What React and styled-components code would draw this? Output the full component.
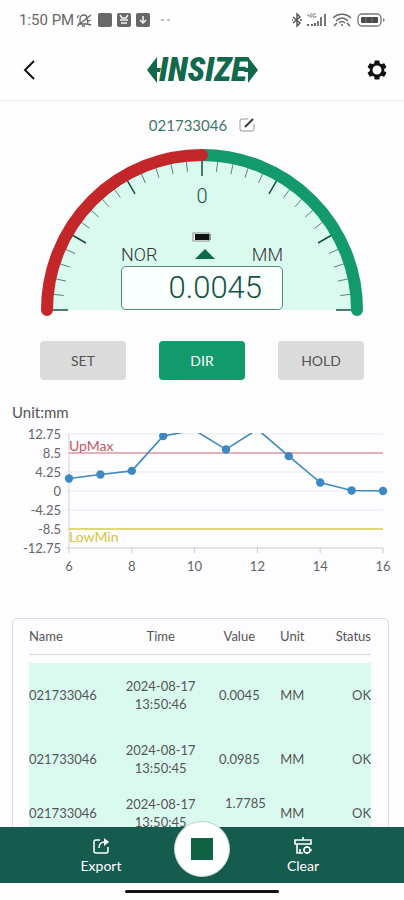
import React from "react";
import styled, { createGlobalStyle, css } from "styled-components";

const series = [
  [6, 2.8],
  [7, 3.7],
  [8, 4.5],
  [9, 12.3],
  [10, 13.6],
  [11, 9.3],
  [12, 13.8],
  [13, 7.8],
  [14, 1.9],
  [15, 0.0985],
  [16, 0.0045],
];

const rows = [
  { name: "021733046", date: "2024-08-17", time: "13:50:46", value: "0.0045" },
  { name: "021733046", date: "2024-08-17", time: "13:50:45", value: "0.0985" },
  {
    name: "021733046",
    date: "2024-08-17",
    time: "13:50:45",
    value: "1.7785",
    compact: true,
  },
];

function StatusIcons() {
  return (
    <StatusGroup>
      <svg width="18" height="16" viewBox="0 0 18 16" fill="none" stroke="#666" strokeWidth="1.3">
        <path d="M3 12h10M5 11V7c0-3 2-4 4-4s3 2 3 4l1 4M7 14h3M2 14 16 3M2 6l2-3M13 9l3-1M12 12l4 1" />
      </svg>
      <svg width="14" height="16" viewBox="0 0 14 16">
        <rect y="1" width="14" height="14" rx="2" fill="#686868" />
      </svg>
      <svg width="14" height="16" viewBox="0 0 14 16">
        <rect y="1" width="14" height="14" rx="2" fill="#686868" />
        <path d="M3 3l2 3h4l2-3M3 8h8M4 11h6" fill="none" stroke="#f4f4f4" strokeWidth="1.4" />
      </svg>
      <svg width="14" height="16" viewBox="0 0 14 16">
        <rect y="1" width="14" height="14" rx="2" fill="#686868" />
        <path d="M7 4v7M4 8l3 3 3-3" fill="none" stroke="#f4f4f4" strokeWidth="1.5" />
      </svg>
      <svg width="16" height="16" viewBox="0 0 16 16" fill="#b5b5b5">
        <rect x="6" y="7" width="3" height="2" rx="1" />
        <rect x="12" y="7" width="3" height="2" rx="1" />
      </svg>
    </StatusGroup>
  );
}

function SystemIcons() {
  return (
    <StatusGroup>
      <svg width="10" height="16" viewBox="0 0 10 16" fill="none" stroke="#555" strokeWidth="1.4">
        <path d="M1 5l7 6-3 3V2l3 3-7 6" />
        <path d="M0 8h1M8 8h2" />
      </svg>
      <svg width="20" height="16" viewBox="0 0 20 16">
        <path d="M1 2v2h3M4 1v5M9 2H6v3h3V4" fill="none" stroke="#888" />
        <path d="M0 12h2v2H0zM4 12h2v2H4zM7 11h2v3H7z" fill="#666" />
        <path d="M10 9h2v5h-2zM13 5h2v9h-2zM17 2h2v12h-2z" fill="#777" />
      </svg>
      <svg width="20" height="16" viewBox="0 0 20 16" fill="none" stroke="#666" strokeWidth="1.5">
        <path d="M1 6c5-5 13-5 18 0M4 9c4-4 8-4 12 0M7 11c2-2 4-2 6 0" />
        <path d="M9 13h2M2 14l3-3M18 14l-3-3" />
      </svg>
      <svg width="28" height="16" viewBox="0 0 28 16">
        <rect x="1" y="2" width="23" height="12" rx="4" fill="none" stroke="#777" strokeWidth="1.3" />
        <rect x="4" y="5" width="17" height="6" rx="1" fill="#4a4a4a" />
        <path d="M9 5v6M15 5v6" stroke="#777" />
        <path d="M26 6v4l2-2z" fill="#777" />
      </svg>
    </StatusGroup>
  );
}

function Logo() {
  return (
    <Brand>
      <svg width="14" height="28" viewBox="0 0 14 28" fill="#11694b">
        <path d="M0 14 10 1v11h4l-1 4h-3v11z" />
      </svg>
      <span>INSIZE</span>
      <svg width="14" height="28" viewBox="0 0 14 28" fill="#11694b">
        <path d="M14 14 4 1v11H1l-1 4h4v11z" />
      </svg>
    </Brand>
  );
}

function Dial() {
  const ticks = [];
  for (let deg = 0; deg <= 180; deg += 6) {
    const major = deg % 30 === 0;
    const a = (deg * Math.PI) / 180;
    const inner = major ? 134 : 139;
    ticks.push(
      <line
        key={deg}
        x1={162 - Math.cos(a) * 149}
        y1={161 - Math.sin(a) * 149}
        x2={162 - Math.cos(a) * inner}
        y2={161 - Math.sin(a) * inner}
        stroke={major ? "#174f3d" : "#5c8376"}
        strokeWidth={major ? 1.5 : 1}
      />
    );
  }
  return (
    <DialSvg viewBox="0 0 324 168" aria-hidden="true">
      <path d="M7 161a155 155 0 0 1 310 0z" fill="#dafaf0" />
      {ticks}
      <path d="M162 6a155 155 0 0 1 155 155" fill="none" stroke="#129a6c" strokeWidth="12" strokeLinecap="round" />
      <path d="M7 161A155 155 0 0 1 162 6" fill="none" stroke="#c4272a" strokeWidth="12" strokeLinecap="round" />
    </DialSvg>
  );
}

function Chart() {
  const x = (n) => 57 + (n - 6) * 31.4;
  const y = (v) => 67 - v * 4.47;
  const levels = [12.75, 8.5, 4.25, 0, -4.25, -8.5, -12.75];
  return (
    <ChartSvg viewBox="0 0 380 156" role="img" aria-label="Measured values">
      <clipPath id="plot">
        <rect x="50" y="9" width="328" height="120" />
      </clipPath>
      {levels.map((v) => (
        <g key={v}>
          <line x1="54" x2={x(16)} y1={y(v)} y2={y(v)} stroke={v === -12.75 ? "#ccc8ce" : "#ece9ee"} />
          <text x="49" y={y(v) + 5} textAnchor="end">
            {v}
          </text>
        </g>
      ))}
      <line x1="57" x2="57" y1={y(12.75)} y2={y(-12.75)} stroke="#d5d1d8" />
      {[6, 8, 10, 12, 14, 16].map((n) => (
        <g key={n}>
          <line x1={x(n)} x2={x(n)} y1={y(-12.75)} y2={y(-12.75) + 5} stroke="#ccc8ce" />
          <text x={x(n)} y="147" textAnchor="middle">
            {n}
          </text>
        </g>
      ))}
      <line x1="57" x2={x(16)} y1={y(8.5)} y2={y(8.5)} stroke="#cf7379" />
      <line x1="57" x2={x(16)} y1={y(-8.5)} y2={y(-8.5)} stroke="#d9cf4a" strokeWidth="1.5" />
      <text x="57" y="27" className="upper">
        UpMax
      </text>
      <text x="57" y="118" className="lower">
        LowMin
      </text>
      <g clipPath="url(#plot)">
        <polyline
          points={series.map(([n, v]) => `${x(n)},${y(v)}`).join(" ")}
          fill="none"
          stroke="#3d8abf"
          strokeWidth="1.6"
        />
        {series
          .filter(([, v]) => v <= 12.75)
          .map(([n, v]) => (
            <circle key={n} cx={x(n)} cy={y(v)} r="4.2" fill="#3d88c0" />
          ))}
      </g>
    </ChartSvg>
  );
}

export default function App() {
  return (
    <Screen>
      <GlobalStyle />
      <StatusBar>
        <StatusGroup>
          <span>1:50 PM</span>
          <StatusIcons />
        </StatusGroup>
        <SystemIcons />
      </StatusBar>
      <Header>
        <IconButton aria-label="Back">
          <svg width="20" height="22" viewBox="0 0 20 22" fill="none" stroke="#111" strokeWidth="2">
            <path d="M14 2 5 11l9 9" />
          </svg>
        </IconButton>
        <Logo />
        <IconButton aria-label="Settings">
          <svg width="24" height="24" viewBox="0 0 24 24" fill="#111">
            <path d="M19.14 12.94c.04-.3.06-.61.06-.94 0-.32-.02-.64-.07-.94l2.03-1.58a.49.49 0 0 0 .12-.61l-1.92-3.32a.49.49 0 0 0-.59-.22l-2.39.96c-.5-.38-1.03-.7-1.62-.94l-.36-2.54a.48.48 0 0 0-.48-.41h-3.84c-.24 0-.43.17-.47.41l-.36 2.54c-.59.24-1.13.57-1.62.94l-2.39-.96a.48.48 0 0 0-.59.22L2.74 8.87c-.12.21-.08.47.12.61l2.03 1.58c-.05.3-.09.63-.09.94s.02.64.07.94l-2.03 1.58a.49.49 0 0 0-.12.61l1.92 3.32c.12.22.37.29.59.22l2.39-.96c.5.38 1.03.7 1.62.94l.36 2.54c.05.24.24.41.48.41h3.84c.24 0 .44-.17.47-.41l.36-2.54c.59-.24 1.13-.56 1.62-.94l2.39.96c.22.08.47 0 .59-.22l1.92-3.32c.12-.22.07-.47-.12-.61zM12 16.5a4.5 4.5 0 1 1 0-9 4.5 4.5 0 0 1 0 9z" />
          </svg>
        </IconButton>
      </Header>
      <Main>
        <Device>
          <span>021733046</span>
          <IconButton aria-label="Rename device">
            <svg width="16" height="16" viewBox="0 0 16 16" fill="none" stroke="#999">
              <path d="M9 2H3a2 2 0 0 0-2 2v8a2 2 0 0 0 2 2h10a2 2 0 0 0 2-2V7" />
              <path d="M6 10 14 2" stroke="#333" strokeWidth="1.8" />
            </svg>
          </IconButton>
        </Device>
        <Gauge>
          <Dial />
          <Readout>
            <Zero>0</Zero>
            <svg width="20" height="10" viewBox="0 0 20 10">
              <rect x="1" y="1" width="16" height="8" fill="#fff" stroke="#888" />
              <rect x="3" y="2" width="14" height="6" fill="#111" />
              <path d="M18 2v6" stroke="#777" strokeWidth="1.5" />
            </svg>
            <Modes>
              <span>NOR</span>
              <svg width="20" height="10" viewBox="0 0 20 10" fill="#11694b">
                <path d="M10 0l10 10H0z" />
              </svg>
              <span>MM</span>
            </Modes>
            <Lcd>0.0045</Lcd>
          </Readout>
        </Gauge>
        <Actions>
          <ModeButton>SET</ModeButton>
          <ModeButton $active>DIR</ModeButton>
          <ModeButton>HOLD</ModeButton>
        </Actions>
        <ChartBox>
          <ChartTitle>Unit:mm</ChartTitle>
          <Chart />
        </ChartBox>
        <Card>
          <Table>
            <thead>
              <tr>
                <Th $align="left" $width="25%">Name</Th>
                <Th $width="27%">Time</Th>
                <Th $width="19%">Value</Th>
                <Th $width="12%">Unit</Th>
                <Th $align="right">Status</Th>
              </tr>
            </thead>
            <tbody>
              <Spacer aria-hidden="true">
                <td colSpan="5" />
              </Spacer>
              {rows.map((r, i) => (
                <Row key={i} $compact={r.compact}>
                  <Td $align="left">{r.name}</Td>
                  <Td>
                    {r.date}
                    <br />
                    {r.time}
                  </Td>
                  <Td $top={r.compact}>{r.value}</Td>
                  <Td>MM</Td>
                  <Td $align="right">OK</Td>
                </Row>
              ))}
            </tbody>
          </Table>
        </Card>
      </Main>
      <Footer>
        <FooterButton>
          <svg width="18" height="18" viewBox="0 0 18 18" fill="none" stroke="#fff" strokeWidth="1.5">
            <path d="M8 3H4a2 2 0 0 0-2 2v9a2 2 0 0 0 2 2h10a2 2 0 0 0 2-2v-4" />
            <path d="M7 11c0-4 2-6 6-6" />
            <path d="M12 1v8l5-4z" fill="#fff" stroke="none" />
          </svg>
          Export
        </FooterButton>
        <StopButton aria-label="Stop">
          <svg width="22" height="22" viewBox="0 0 22 22">
            <rect width="22" height="22" fill="#0f6244" />
          </svg>
        </StopButton>
        <FooterButton>
          <svg width="20" height="18" viewBox="0 0 20 18" fill="none" stroke="#fff" strokeWidth="1.6">
            <path d="M10 0v3M2 7V3h16v4zM4 7v9h6M7 12v4" />
            <circle cx="14" cy="13" r="3" />
            <path d="M10 13h1M17 13h2M14 9v1M14 16v1" />
          </svg>
          Clear
        </FooterButton>
      </Footer>
      <HomeArea>
        <HomeBar />
      </HomeArea>
    </Screen>
  );
}

const GlobalStyle = createGlobalStyle`
  * {
    box-sizing: border-box;
  }
  body {
    margin: 0;
    background: #fdfcfe;
    font-family: Lato, "Open Sans", sans-serif;
    color: #555;
  }
  button {
    font-family: inherit;
    border: none;
    cursor: pointer;
  }
  svg {
    display: block;
    flex-shrink: 0;
  }
`;

const Screen = styled.div`
  display: flex;
  flex-direction: column;
  height: 100vh;
`;

const StatusBar = styled.div`
  display: flex;
  justify-content: space-between;
  align-items: center;
  height: 40px;
  padding: 0 19px;
  background: #fefefe;
  font-family: Roboto, sans-serif;
  font-size: 15px;
  color: #666;
`;

const StatusGroup = styled.div`
  display: flex;
  align-items: center;
  gap: 5px;
  > div {
    margin-left: -4px;
  }
`;

const Header = styled.header`
  display: flex;
  justify-content: space-between;
  align-items: center;
  height: 61px;
  padding: 0 15px 0 20px;
  background: #fefefe;
  border-bottom: 1px solid #efedf0;
`;

const IconButton = styled.button`
  display: flex;
  padding: 0;
  background: none;
`;

const Brand = styled.div`
  display: flex;
  align-items: center;
  span {
    font-family: "Roboto Condensed", Roboto, sans-serif;
    font-size: 33px;
    line-height: 28px;
    font-weight: 900;
    font-style: italic;
    color: #11694b;
    margin: 0 -3px 0 -2px;
  }
`;

const Main = styled.main`
  flex: 1;
  min-height: 0;
  overflow-y: auto;
  scrollbar-width: none;
`;

const Device = styled.div`
  display: flex;
  justify-content: center;
  align-items: center;
  gap: 12px;
  height: 48px;
  font-size: 15px;
  color: #437766;
`;

const Gauge = styled.section`
  display: grid;
  margin: 0 40px;
  > * {
    grid-area: 1 / 1;
  }
`;

const DialSvg = styled.svg`
  width: 100%;
`;

const Readout = styled.div`
  align-self: end;
  justify-self: center;
  display: flex;
  flex-direction: column;
  align-items: center;
  width: 50%;
  padding-bottom: 7px;
  font-family: Roboto, sans-serif;
  font-weight: 300;
  color: #175240;
`;

const Zero = styled.span`
  font-size: 20px;
  line-height: 24px;
  margin-bottom: 24px;
`;

const Modes = styled.div`
  display: flex;
  justify-content: space-between;
  align-items: center;
  width: 100%;
  height: 24px;
  font-size: 18px;
  color: #333;
`;

const Lcd = styled.output`
  width: 100%;
  height: 44px;
  padding-right: 20px;
  border: 1px solid #5f8578;
  border-radius: 5px;
  background: #f8fffd;
  font-size: 31px;
  line-height: 42px;
  text-align: right;
`;

const Actions = styled.div`
  display: grid;
  grid-template-columns: repeat(3, 1fr);
  gap: 33px;
  margin: 24px 40px 0;
`;

const ModeButton = styled.button`
  height: 39px;
  border-radius: 4px;
  font-size: 14px;
  background: ${(p) => (p.$active ? "#129a6c" : "#dbdbdb")};
  color: ${(p) => (p.$active ? "#fff" : "#555")};
`;

const ChartBox = styled.section`
  margin: 22px 12px 0;
`;

const ChartTitle = styled.div`
  font-size: 15px;
  line-height: 20px;
  margin-bottom: 2px;
`;

const ChartSvg = styled.svg`
  width: 100%;
  overflow: visible;
  text {
    font-size: 13px;
    fill: #666;
  }
  .upper {
    font-size: 14px;
    fill: #c25a66;
  }
  .lower {
    font-size: 14px;
    fill: #d6c63c;
  }
`;

const Card = styled.section`
  margin: 38px 15px 16px 12px;
  padding: 0 17px 16px 16px;
  border: 1px solid #dfdbe1;
  border-radius: 5px;
`;

const Table = styled.table`
  width: 100%;
  table-layout: fixed;
  border-collapse: collapse;
  font-size: 13px;
  line-height: 18px;
`;

const Th = styled.th`
  width: ${(p) => p.$width || "auto"};
  height: 35px;
  padding: 0;
  border-bottom: 1px solid #d9d5da;
  font-weight: 400;
  text-align: ${(p) => p.$align || "center"};
`;

const Spacer = styled.tr`
  height: 9px;
  td {
    padding: 0;
  }
`;

const Row = styled.tr`
  height: ${(p) => (p.$compact ? "44px" : "64px")};
  background: #dafaf0;
`;

const Td = styled.td`
  padding: 0;
  text-align: ${(p) => p.$align || "center"};
  ${(p) =>
    p.$top &&
    css`
      padding: 3px 6px 0 0;
      text-align: right;
      vertical-align: top;
    `}
`;

const Footer = styled.footer`
  display: flex;
  justify-content: center;
  align-items: center;
  gap: 24px;
  height: 56px;
  background: #155c4f;
`;

const FooterButton = styled.button`
  display: flex;
  flex-direction: column;
  align-items: center;
  gap: 2px;
  width: 98px;
  padding-top: 3px;
  background: none;
  font-size: 14px;
  line-height: 18px;
  color: #fff;
`;

const StopButton = styled.button`
  display: flex;
  align-items: center;
  justify-content: center;
  width: 56px;
  height: 56px;
  margin-top: -12px;
  border: 1px solid #b8d4cb;
  border-radius: 50%;
  background: #fff;
  z-index: 1;
`;

const HomeArea = styled.div`
  display: flex;
  justify-content: center;
  padding: 7px 0;
  background: #fefefe;
`;

const HomeBar = styled.div`
  width: 38%;
  height: 3px;
  border-radius: 2px;
  background: #151515;
`;
